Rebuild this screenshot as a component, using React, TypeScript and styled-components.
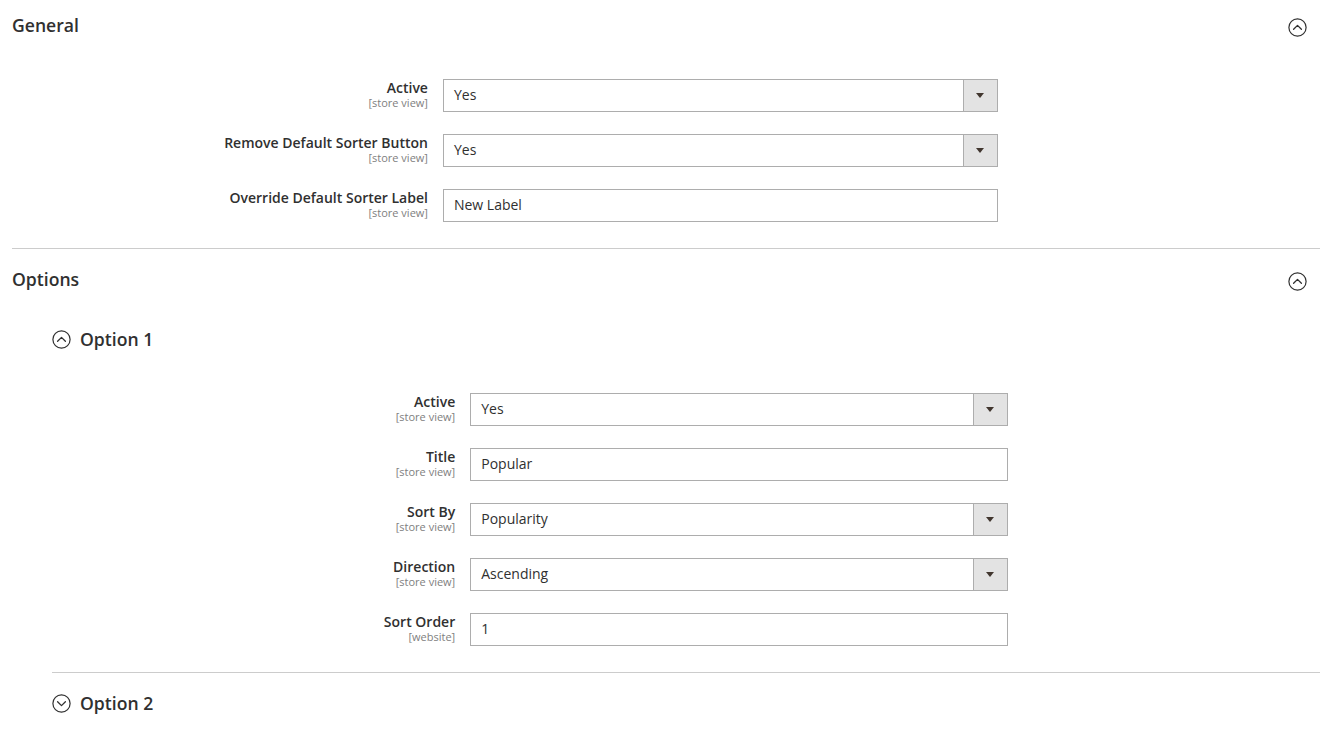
import React from "react";
import styled, { createGlobalStyle } from "styled-components";

const Global = createGlobalStyle`
  html, body { margin: 0; padding: 0; background: #fff; }
  body { font-family: "Open Sans", "Noto Sans", sans-serif; color: #303030; }
  * { box-sizing: border-box; }
`;

const Page = styled.div`
  padding: 0 17px 0 12px;
`;

const Section = styled.section<{ $divider?: boolean; $indent?: number }>`
  margin-left: ${(p) => p.$indent ?? 0}px;
  border-top: ${(p) => (p.$divider ? "1px solid #cccccc" : "none")};
  padding-top: ${(p) => (p.$divider ? 5 : 0)}px;
`;

const Header = styled.div<{ $sub?: boolean; $top?: number }>`
  height: 50px;
  display: flex;
  align-items: center;
  justify-content: ${(p) => (p.$sub ? "flex-start" : "space-between")};
  gap: 9px;
  margin-top: ${(p) => p.$top ?? 0}px;
`;

const Title = styled.h2`
  margin: 0;
  font-size: 17.6px;
  font-weight: 600;
  color: #303030;
  line-height: 1;
  padding-top: 1px;
`;

const IconWrap = styled.span<{ $right?: boolean }>`
  display: inline-flex;
  width: 19px;
  height: 19px;
  margin-right: ${(p) => (p.$right ? 13 : 0)}px;
  margin-top: ${(p) => (p.$right ? 4 : 0)}px;
`;

const Fields = styled.div`
  display: flex;
  flex-direction: column;
  gap: 22px;
  padding-top: 29px;
  padding-bottom: 26px;
`;

const Row = styled.div`
  display: grid;
  grid-template-columns: 31.8% 42.4%;
  column-gap: 15px;
  align-items: start;
  height: 33px;
`;

const LabelBox = styled.div`
  text-align: right;
  padding-top: 1px;
`;

const LabelText = styled.div`
  font-size: 14px;
  font-weight: 600;
  color: #303030;
  line-height: 16px;
`;

const Scope = styled.div`
  font-size: 11px;
  color: #808080;
  line-height: 13px;
`;

const Control = styled.div`
  height: 33px;
  border: 1px solid #adadad;
  background: #fff;
  display: flex;
  align-items: stretch;
`;

const Value = styled.div`
  flex: 1;
  display: flex;
  align-items: center;
  padding: 0 0 2px 10px;
  font-size: 14px;
  color: #303030;
`;

const ArrowBtn = styled.div`
  width: 34px;
  border-left: 1px solid #adadad;
  background: #e3e3e3;
  display: flex;
  align-items: center;
  justify-content: center;
`;

const Arrow = styled.span`
  width: 0;
  height: 0;
  border-left: 4px solid transparent;
  border-right: 4px solid transparent;
  border-top: 5px solid #41362f;
`;

const Chevron = ({ up }: { up: boolean }) => (
  <svg width="19" height="19" viewBox="0 0 19 19" fill="none">
    <circle cx="9.5" cy="9.5" r="8.6" stroke="#303030" strokeWidth="1.2" />
    <path
      d={up ? "M5.6 11.2 L9.5 7.4 L13.4 11.2" : "M5.6 7.8 L9.5 11.6 L13.4 7.8"}
      stroke="#303030"
      strokeWidth="1.3"
      strokeLinecap="round"
      strokeLinejoin="round"
    />
  </svg>
);

type Field = { label: string; scope: string; value: string; select?: boolean };

const FieldRow = ({ f }: { f: Field }) => (
  <Row>
    <LabelBox>
      <LabelText>{f.label}</LabelText>
      <Scope>{f.scope}</Scope>
    </LabelBox>
    <Control>
      <Value>{f.value}</Value>
      {f.select && (
        <ArrowBtn>
          <Arrow />
        </ArrowBtn>
      )}
    </Control>
  </Row>
);

const general: Field[] = [
  { label: "Active", scope: "[store view]", value: "Yes", select: true },
  { label: "Remove Default Sorter Button", scope: "[store view]", value: "Yes", select: true },
  { label: "Override Default Sorter Label", scope: "[store view]", value: "New Label" },
];

const option1: Field[] = [
  { label: "Active", scope: "[store view]", value: "Yes", select: true },
  { label: "Title", scope: "[store view]", value: "Popular" },
  { label: "Sort By", scope: "[store view]", value: "Popularity", select: true },
  { label: "Direction", scope: "[store view]", value: "Ascending", select: true },
  { label: "Sort Order", scope: "[website]", value: "1" },
];

export default function App() {
  return (
    <Page>
      <Global />
      <Section>
        <Header>
          <Title>General</Title>
          <IconWrap $right>
            <Chevron up />
          </IconWrap>
        </Header>
        <Fields>
          {general.map((f) => (
            <FieldRow key={f.label} f={f} />
          ))}
        </Fields>
      </Section>
      <Section $divider>
        <Header>
          <Title>Options</Title>
          <IconWrap $right>
            <Chevron up />
          </IconWrap>
        </Header>
        <Section $indent={40}>
          <Header $sub $top={10}>
            <IconWrap>
              <Chevron up />
            </IconWrap>
            <Title>Option 1</Title>
          </Header>
          <Fields>
            {option1.map((f) => (
              <FieldRow key={f.label} f={f} />
            ))}
          </Fields>
        </Section>
        <Section $indent={40} $divider>
          <Header $sub>
            <IconWrap>
              <Chevron up={false} />
            </IconWrap>
            <Title>Option 2</Title>
          </Header>
        </Section>
      </Section>
    </Page>
  );
}
